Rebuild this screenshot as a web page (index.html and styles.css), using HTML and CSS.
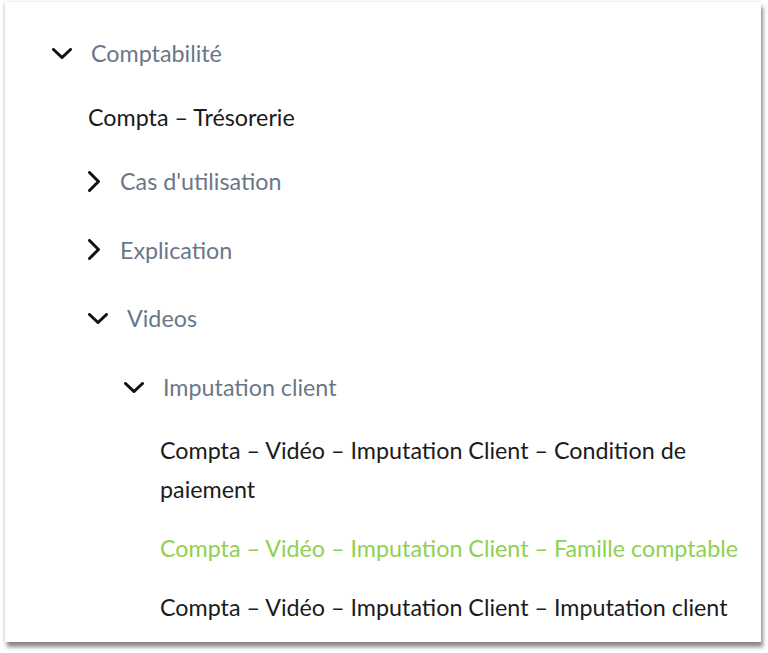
FILE: index.html
```html
<!DOCTYPE html>
<html lang="fr">
<head>
<meta charset="utf-8">
<link rel="stylesheet" href="styles.css">
</head>
<body>
<div class="card">
  <ul class="tree">
    <li>
      <div class="row"><span class="ico ico-down"><svg width="20" height="11" viewBox="0 0 20 11"><polyline points="1.5,1.5 10,9.5 18.5,1.5"/></svg></span><span class="label">Comptabilité</span></div>
      <ul class="tree sub">
        <li><p class="leaf">Compta – Trésorerie</p></li>
        <li><div class="row"><span class="ico ico-right"><svg width="12" height="21" viewBox="0 0 12 21"><polyline points="1.5,1.5 10.5,10.5 1.5,19.5"/></svg></span><span class="label">Cas d'utilisation</span></div></li>
        <li><div class="row"><span class="ico ico-right"><svg width="12" height="21" viewBox="0 0 12 21"><polyline points="1.5,1.5 10.5,10.5 1.5,19.5"/></svg></span><span class="label">Explication</span></div></li>
        <li>
          <div class="row"><span class="ico ico-down"><svg width="20" height="11" viewBox="0 0 20 11"><polyline points="1.5,1.5 10,9.5 18.5,1.5"/></svg></span><span class="label">Videos</span></div>
          <ul class="tree sub">
            <li>
              <div class="row"><span class="ico ico-down"><svg width="20" height="11" viewBox="0 0 20 11"><polyline points="1.5,1.5 10,9.5 18.5,1.5"/></svg></span><span class="label">Imputation client</span></div>
              <ul class="tree sub">
                <li><p class="leaf">Compta – Vidéo – Imputation Client – Condition de paiement</p></li>
                <li><p class="leaf leaf-active">Compta – Vidéo – Imputation Client – Famille comptable</p></li>
                <li><p class="leaf">Compta – Vidéo – Imputation Client – Imputation client</p></li>
              </ul>
            </li>
          </ul>
        </li>
      </ul>
    </li>
  </ul>
</div>
</body>
</html>
```

FILE: styles.css
```css
html, body {
  margin: 0;
  padding: 0;
  background: #ffffff;
}
body {
  font-family: "Lato", "Open Sans", sans-serif;
  font-size: 23.3px;
  color: #1b1b1b;
  min-height: 653px;
  padding-top: 2px;
  box-sizing: border-box;
}
.card {
  margin: 0 0 0 5px;
  width: 756px;
  height: 640px;
  box-sizing: border-box;
  padding: 17px 16px 0 47px;
  background: #ffffff;
  box-shadow: -1px 0 3px rgba(0,0,0,0.14), 2px 5px 4px rgba(0,0,0,0.45);
}
.tree {
  list-style: none;
  margin: 0;
  padding: 0;
}
.tree.sub {
  padding-left: 36px;
}
.row {
  display: flex;
  align-items: center;
  height: 68.7px;
}
.ico {
  display: flex;
  align-items: center;
  flex: none;
}
.ico svg polyline {
  fill: none;
  stroke: #111111;
  stroke-width: 3;
  stroke-linecap: round;
  stroke-linejoin: miter;
}
.ico-down {
  width: 39px;
}
.ico-right {
  width: 32px;
}
.label {
  color: #6b7789;
}
.leaf {
  margin: 0;
  padding: 10px 0;
  line-height: 39px;
}
.leaf-active {
  color: #8fd14f;
}
```
